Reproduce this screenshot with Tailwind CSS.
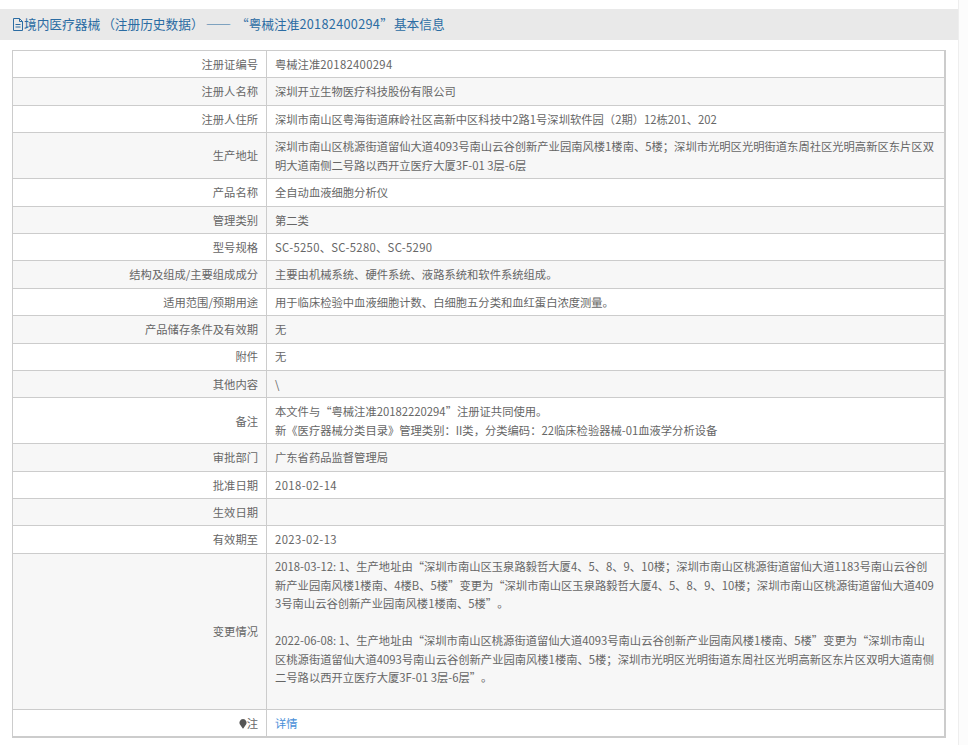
<!DOCTYPE html>
<html lang="zh-CN">
<head>
<meta charset="UTF-8" />
<title>境内医疗器械（注册历史数据）</title>
<script src="https://cdn.jsdelivr.net/npm/@tailwindcss/browser@4"></script>
</head>
<body class="bg-[#fcfcfc] text-[#666] font-['Noto_Sans_CJK_SC','Noto_Sans',sans-serif] text-[11.3px] leading-[18.5px] overflow-hidden [text-spacing-trim:space-all]">
  <div class="w-[959px] h-[745px] pt-[9px] bg-white border-r border-[#eee]">
    <!-- title bar -->
    <div class="h-[31px] bg-[#e9e9e9] pl-[12px] flex items-center text-[12.7px] text-[#2b6ca3]">
      <svg class="w-[12px] h-[13px] shrink-0" viewBox="0 0 12 13" fill="none" stroke="#2b6ca3" stroke-width="1"><path d="M1.5 .5h6l3 3v9h-9zM7.5 .5v3h3M3.5 6.5h5M3.5 9h5"/></svg>
      <span>境内医疗器械<span class="mx-[2px]">（注册历史数据）</span><span class="tracking-[5px]">——</span>“粤械注准<span class="tracking-[0.3px]">20182400294</span>”<span class="ml-[1px]">基本信息</span></span>
    </div>

    <!-- detail table -->
    <table class="ml-[12px] mt-[10px] w-[934px] border-collapse border-t border-l border-r-2 border-b-2 border-[#ccc] table-fixed break-all">
      <colgroup><col class="w-[254px]" /><col /></colgroup>
      <tbody>
        <tr class="h-[27.4px] border-b border-[#ccc]"><td class="pr-[8px] text-right border-r border-[#ccc]">注册证编号</td><td class="px-[8px]">粤械注准<span class="tracking-[0.3px]">20182400294</span></td></tr>
        <tr class="h-[27.4px] border-b border-[#ccc] bg-[#f7f7f7]"><td class="pr-[8px] text-right border-r border-[#ccc]">注册人名称</td><td class="px-[8px]">深圳开立生物医疗科技股份有限公司</td></tr>
        <tr class="h-[27.4px] border-b border-[#ccc]"><td class="pr-[8px] text-right border-r border-[#ccc]">注册人住所</td><td class="px-[8px]">深圳市南山区粤海街道麻岭社区高新中区科技中2路1号深圳软件园（2期）12栋201、202</td></tr>
        <tr class="border-b border-[#ccc] bg-[#f7f7f7]"><td class="pr-[8px] text-right border-r border-[#ccc]">生产地址</td><td class="px-[8px] py-[4px]">深圳市南山区桃源街道留仙大道4093号南山云谷创新产业园南风楼1楼南、5楼；深圳市光明区光明街道东周社区光明高新区东片区双明大道南侧二号路以西开立医疗大厦3F-01 3层-6层</td></tr>
        <tr class="h-[27.4px] border-b border-[#ccc]"><td class="pr-[8px] text-right border-r border-[#ccc]">产品名称</td><td class="px-[8px]">全自动血液细胞分析仪</td></tr>
        <tr class="h-[27.4px] border-b border-[#ccc] bg-[#f7f7f7]"><td class="pr-[8px] text-right border-r border-[#ccc]">管理类别</td><td class="px-[8px]">第二类</td></tr>
        <tr class="h-[27.4px] border-b border-[#ccc]"><td class="pr-[8px] text-right border-r border-[#ccc]">型号规格</td><td class="px-[8px] tracking-[0.3px]">SC-5250、SC-5280、SC-5290</td></tr>
        <tr class="h-[27.4px] border-b border-[#ccc] bg-[#f7f7f7]"><td class="pr-[8px] text-right border-r border-[#ccc]">结构及组成/主要组成成分</td><td class="px-[8px]">主要由机械系统、硬件系统、液路系统和软件系统组成。</td></tr>
        <tr class="h-[27.4px] border-b border-[#ccc]"><td class="pr-[8px] text-right border-r border-[#ccc]">适用范围/预期用途</td><td class="px-[8px]">用于临床检验中血液细胞计数、白细胞五分类和血红蛋白浓度测量。</td></tr>
        <tr class="h-[27.4px] border-b border-[#ccc] bg-[#f7f7f7]"><td class="pr-[8px] text-right border-r border-[#ccc]">产品储存条件及有效期</td><td class="px-[8px]">无</td></tr>
        <tr class="h-[27.4px] border-b border-[#ccc]"><td class="pr-[8px] text-right border-r border-[#ccc]">附件</td><td class="px-[8px]">无</td></tr>
        <tr class="h-[27.4px] border-b border-[#ccc] bg-[#f7f7f7]"><td class="pr-[8px] text-right border-r border-[#ccc]">其他内容</td><td class="px-[8px]">\</td></tr>
        <tr class="border-b border-[#ccc]"><td class="pr-[8px] text-right border-r border-[#ccc]">备注</td><td class="px-[8px] py-[4px]">本文件与“粤械注准20182220294”注册证共同使用。<br />新《医疗器械分类目录》管理类别：II类，分类编码：22临床检验器械-01血液学分析设备</td></tr>
        <tr class="h-[27.4px] border-b border-[#ccc] bg-[#f7f7f7]"><td class="pr-[8px] text-right border-r border-[#ccc]">审批部门</td><td class="px-[8px]">广东省药品监督管理局</td></tr>
        <tr class="h-[27.4px] border-b border-[#ccc]"><td class="pr-[8px] text-right border-r border-[#ccc]">批准日期</td><td class="px-[8px] tracking-[0.4px]">2018-02-14</td></tr>
        <tr class="h-[27.4px] border-b border-[#ccc] bg-[#f7f7f7]"><td class="pr-[8px] text-right border-r border-[#ccc]">生效日期</td><td class="px-[8px]"></td></tr>
        <tr class="h-[27.4px] border-b border-[#ccc]"><td class="pr-[8px] text-right border-r border-[#ccc]">有效期至</td><td class="px-[8px] tracking-[0.4px]">2023-02-13</td></tr>
        <tr class="border-b border-[#ccc] bg-[#f7f7f7]"><td class="pr-[8px] text-right border-r border-[#ccc]">变更情况</td><td class="px-[8px] py-[3.5px]">2018-03-12: 1、生产地址由“深圳市南山区玉泉路毅哲大厦4、5、8、9、10楼；深圳市南山区桃源街道留仙大道1183号南山云谷创新产业园南风楼1楼南、4楼B、5楼”变更为“深圳市南山区玉泉路毅哲大厦4、5、8、9、10楼；深圳市南山区桃源街道留仙大道4093号南山云谷创新产业园南风楼1楼南、5楼”。<br /><br />2022-06-08: 1、生产地址由“深圳市南山区桃源街道留仙大道4093号南山云谷创新产业园南风楼1楼南、5楼”变更为“深圳市南山区桃源街道留仙大道4093号南山云谷创新产业园南风楼1楼南、5楼；深圳市光明区光明街道东周社区光明高新区东片区双明大道南侧二号路以西开立医疗大厦3F-01 3层-6层”。<br /><br /></td></tr>
        <tr class="h-[27.4px]"><td class="pr-[8px] text-right border-r border-[#ccc]"><svg class="inline-block w-[8px] h-[10px] align-[-1px]" viewBox="0 0 9 11"><path fill="#555" d="M4.5 0a4 4 0 0 1 3 6.600L4.800 10.600h-.6L1.500 6.600A4 4 0 0 1 4.500 0z"/></svg>注</td><td class="px-[8px] text-[#4a8fd8]">详情</td></tr>
      </tbody>
    </table>
  </div>
</body>
</html>
